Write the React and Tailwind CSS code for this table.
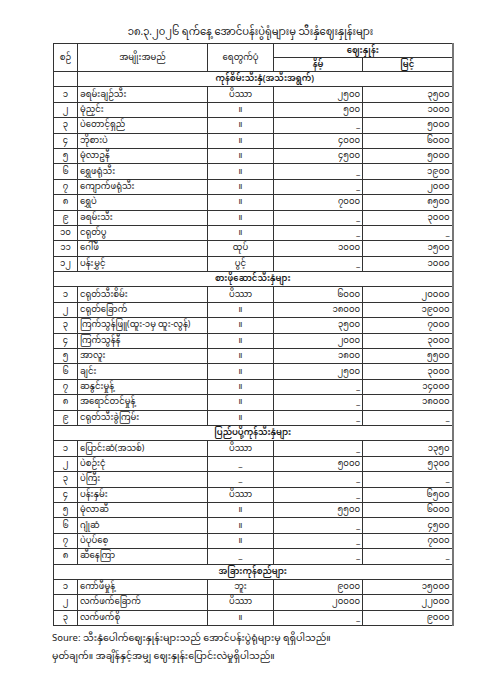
import React from "react";

const D = "။";

const sections = [
  {
    title: "ကုန်စိမ်းသီးနှံ(အသီးအရွက်)",
    split: true,
    rows: [
      ["ခရမ်းချဉ်သီး", "ပိဿာ", "၂၅၀၀", "၃၅၀၀"],
      ["မုံညှင်း", D, "၅၀၀", "၁၀၀၀"],
      ["ပဲတောင့်ရှည်", D, "_", "၅၀၀၀"],
      ["ဘိုစားပဲ", D, "၄၀၀၀", "၆၀၀၀"],
      ["မုံလာဥနီ", D, "၄၅၀၀", "၅၀၀၀"],
      ["ရွှေဖရုံသီး", D, "_", "၁၉၀၀"],
      ["ကျောက်ဖရုံသီး", D, "_", "၂၀၀၀"],
      ["ရွှေပဲ", D, "၇၀၀၀", "၈၅၀၀"],
      ["ခရမ်းသီး", D, "_", "၃၀၀၀"],
      ["ငရုတ်ပွ", D, "_", "_"],
      ["ဂေါ်ဖီ", "ထုပ်", "၁၀၀၀", "၁၅၀၀"],
      ["ပန်းမွှင့်", "ပွင့်", "_", "၁၀၀၀"],
    ],
  },
  {
    title: "စားဖိုဆောင်သီးနှံများ",
    rows: [
      ["ငရုတ်သီးစိမ်း", "ပိဿာ", "၆၀၀၀", "၂၀၀၀၀"],
      ["ငရုတ်ခြောက်", D, "၁၈၀၀၀", "၁၉၀၀၀"],
      ["ကြက်သွန်ဖြူ(ထူး-၁မှ ထူး-လွန်)", D, "၃၅၀၀", "၇၀၀၀"],
      ["ကြက်သွန်နီ", D, "၂၀၀၀", "၃၀၀၀"],
      ["အာလူး", D, "၁၈၀၀", "၅၅၀၀"],
      ["ချင်း", D, "၂၅၀၀", "၃၀၀၀"],
      ["ဆနွင်းမှုန့်", D, "_", "၁၄၀၀၀"],
      ["အရောင်တင်မှုန့်", D, "_", "၁၈၀၀၀"],
      ["ငရုတ်သီးခွဲကြမ်း", D, "_", "_"],
    ],
  },
  {
    title: "ပြည်ပပို့ကုန်သီးနှံများ",
    rows: [
      ["ပြောင်းဆံ(အသစ်)", "ပိဿာ", "_", "၁၃၅၀"],
      ["ပဲစဉ်းငုံ", "_", "၅၀၀၀", "၅၃၀၀"],
      ["ပဲကြီး", "_", "_", "_"],
      ["ပန်းနှမ်း", "ပိဿာ", "_", "၆၅၀၀"],
      ["မုံလာဆီ", D, "၅၅၀၀", "၆၀၀၀"],
      ["ဂျုံဆံ", D, "_", "၄၅၀၀"],
      ["ပဲပုပ်စေ့", D, "_", "၇၀၀၀"],
      ["ဆီနေကြာ", "_", "_", "_"],
    ],
  },
  {
    title: "အခြားကုန်စည်များ",
    rows: [
      ["ကော်ဖီမှုန့်", "ဘူး", "၉၀၀၀", "၁၅၀၀၀"],
      ["လက်ဖက်ခြောက်", "ပိဿာ", "၂၀၀၀၀", "၂၂၀၀၀"],
      ["လက်ဖက်စို", D, "_", "၉၀၀၀"],
    ],
  },
];

const num = ["၀", "၁", "၂", "၃", "၄", "၅", "၆", "၇", "၈", "၉"];
const mm = (n) => String(n).split("").map((d) => num[d]).join("");

const cell = "border border-[#333] px-[2px] py-0 align-middle whitespace-nowrap";

export default function App() {
  return (
    <div
      className="w-[495px] h-[700px] bg-white text-[#1a1a1a] pt-[26px]"
      style={{ fontFamily: '"Noto Sans Myanmar", "Padauk", "Myanmar Text", "Noto Sans", sans-serif' }}
    >
      <div className="text-center text-[10px] leading-[14px] pl-[6px]">
        ၁၈.၃.၂၀၂၆ ရက်နေ့ အောင်ပန်းပွဲရုံများမှ သီးနှံဈေးနှုန်းများ
      </div>

      <table className="ml-[53px] mt-[3px] w-[399px] border-collapse table-fixed text-[8.5px] leading-[10px] border-r-2 border-r-[#777]">
        <colgroup>
          <col className="w-[24px]" />
          <col className="w-[130px]" />
          <col className="w-[66px]" />
          <col className="w-[89px]" />
          <col className="w-[90px]" />
        </colgroup>
        <thead>
          <tr className="h-[14px]">
            <th rowSpan={2} className={`${cell} font-normal text-center`}>စဉ်</th>
            <th rowSpan={2} className={`${cell} font-normal text-center`}>အမျိုးအမည်</th>
            <th rowSpan={2} className={`${cell} font-normal text-center`}>ရေတွက်ပုံ</th>
            <th colSpan={2} className={`${cell} font-semibold text-center`}>ဈေးနှုန်း</th>
          </tr>
          <tr className="h-[14px]">
            <th className={`${cell} font-semibold text-center`}>နိမ့်</th>
            <th className={`${cell} font-semibold text-center`}>မြင့်</th>
          </tr>
        </thead>
        <tbody>
          {sections.map((s) => (
            <React.Fragment key={s.title}>
              <tr className="h-[15.4px]">
                {s.split ? (
                  <>
                    <td className={cell}></td>
                    <td colSpan={4} className={`${cell} text-center font-semibold`}>{s.title}</td>
                  </>
                ) : (
                  <td colSpan={5} className={`${cell} text-center font-semibold`}>{s.title}</td>
                )}
              </tr>
              {s.rows.map((r, i) => (
                <tr key={r[0]} className="h-[15.4px]">
                  <td className={`${cell} text-center`}>{mm(i + 1)}</td>
                  <td className={`${cell} text-left`}>{r[0]}</td>
                  <td className={`${cell} text-center`}>{r[1]}</td>
                  <td className={`${cell} text-right`}>{r[2]}</td>
                  <td className={`${cell} text-right`}>{r[3]}</td>
                </tr>
              ))}
            </React.Fragment>
          ))}
        </tbody>
      </table>

      <div className="ml-[52px] mt-[4px] text-[9.5px] leading-[18px]">
        <p>Soure: သီးနှံပေါက်ဈေးနှုန်းများသည် အောင်ပန်းပွဲရုံများမှ ရရှိပါသည်။</p>
        <p>မှတ်ချက်။ အချိန်နှင့်အမျှ ဈေးနှုန်းပြောင်းလဲမှုရှိပါသည်။</p>
      </div>
    </div>
  );
}
